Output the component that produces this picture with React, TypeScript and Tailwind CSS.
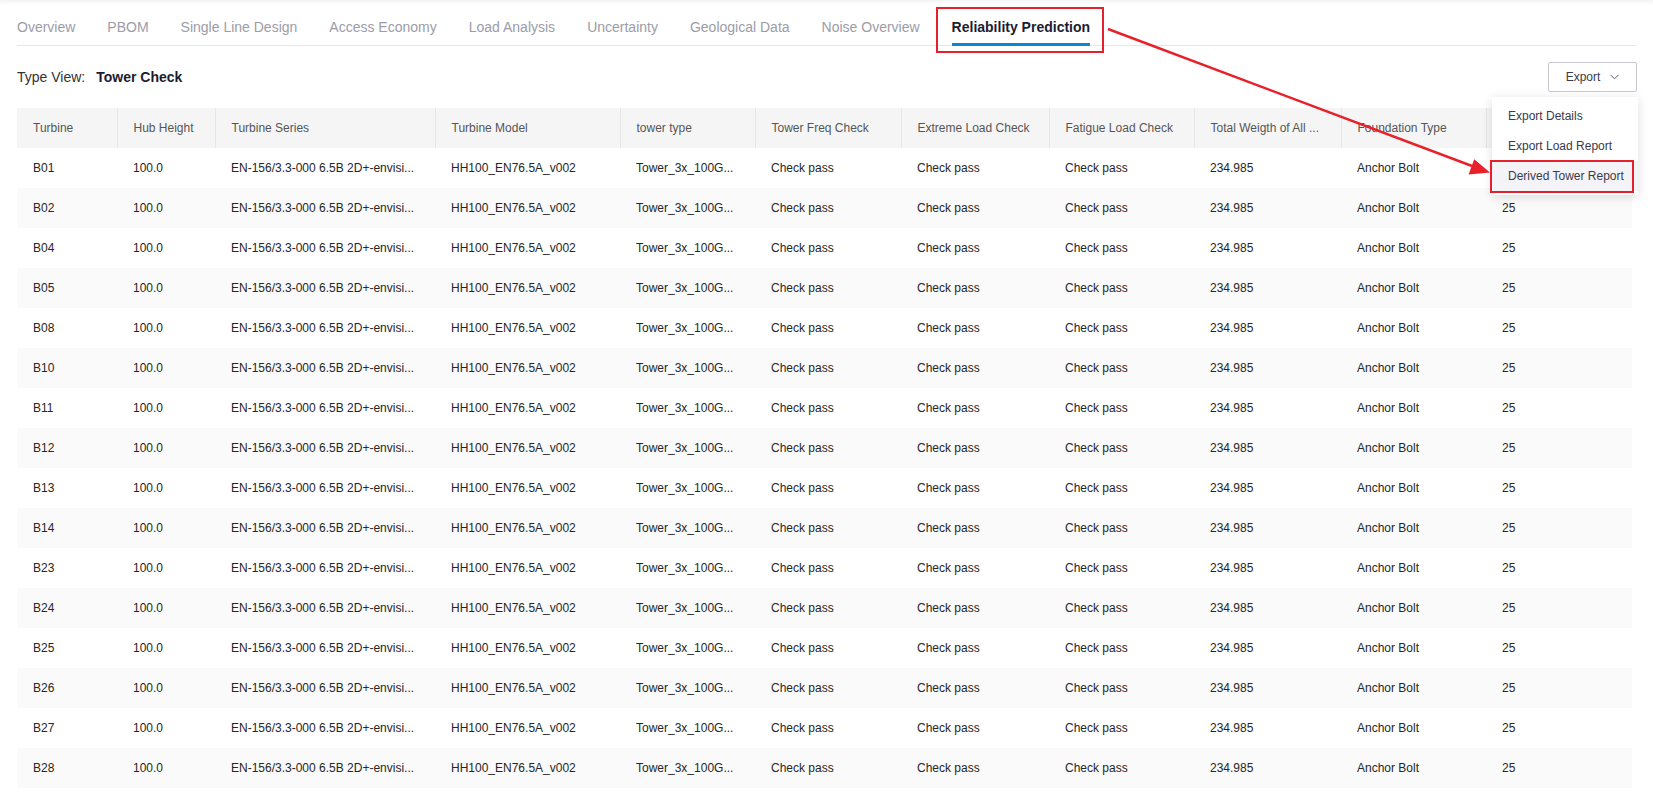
import React from 'react';

const tabs = [
  'Overview',
  'PBOM',
  'Single Line Design',
  'Access Economy',
  'Load Analysis',
  'Uncertainty',
  'Geological Data',
  'Noise Overview',
  'Reliability Prediction',
];

// last header is hidden under the export menu in the screen
const columns = [
  { title: 'Turbine', width: 100 },
  { title: 'Hub Height', width: 98 },
  { title: 'Turbine Series', width: 220 },
  { title: 'Turbine Model', width: 185 },
  { title: 'tower type', width: 135 },
  { title: 'Tower Freq Check', width: 146 },
  { title: 'Extreme Load Check', width: 148 },
  { title: 'Fatigue Load Check', width: 145 },
  { title: 'Total Weigth of All ...', width: 147 },
  { title: 'Foundation Type', width: 145 },
  { title: '', width: 146 },
];

const turbines = ['B01', 'B02', 'B04', 'B05', 'B08', 'B10', 'B11', 'B12', 'B13', 'B14', 'B23', 'B24', 'B25', 'B26', 'B27', 'B28'];

const rows = turbines.map((id) => [
  id,
  '100.0',
  'EN-156/3.3-000 6.5B 2D+-envisi...',
  'HH100_EN76.5A_v002',
  'Tower_3x_100G...',
  'Check pass',
  'Check pass',
  'Check pass',
  '234.985',
  'Anchor Bolt',
  '25',
]);

// red callout arrow drawn over the page
function Arrow() {
  return (
    <svg className="pointer-events-none absolute left-0 top-0" width="1653" height="796">
      <line x1="1108" y1="29" x2="1472" y2="166" stroke="#e8202a" strokeWidth="2.5" />
      <polygon points="1490,172.5 1468.6,174.4 1474.2,159.3" fill="#e8202a" />
    </svg>
  );
}

export default function App() {
  return (
    <div
      className="relative h-[796px] overflow-hidden bg-white px-[17px] text-[#333] shadow-[inset_0_5px_5px_-4px_rgba(0,0,0,0.07)]"
      style={{ fontFamily: '"Liberation Sans", Arial, sans-serif' }}
    >
      {/* tabs */}
      <div className="flex h-[46px] gap-8 border-b border-[#e6e6e9]">
        {tabs.map((t) => {
          const active = t === 'Reliability Prediction';
          return (
            <div
              key={t}
              className={
                active
                  ? 'relative -mb-px flex h-[46px] items-center border-b-[3px] border-[#0a88d4] pt-[11px] text-[14px] font-bold text-[#1c1c33]'
                  : 'relative -mb-px flex h-[46px] items-center border-b-[3px] border-transparent pt-[11px] text-[14px] text-[#9c9ca8]'
              }
            >
              {t}
              {active && (
                <div className="absolute left-[-16px] right-[-14px] top-[7px] h-[46px] border-2 border-[#e4202a]" />
              )}
            </div>
          );
        })}
      </div>

      {/* type view + export */}
      <div className="mt-4 flex h-[30px] items-center justify-between">
        <div className="flex items-center gap-[11px] text-[14px]">
          <span className="text-[#333]">Type View:</span>
          <span className="font-bold text-[#1c1c2e]">Tower Check</span>
        </div>
        <button className="mr-[-1px] flex h-[30px] w-[89px] items-center justify-center gap-[10px] rounded-[2px] border border-[#c9c9d2] bg-white text-[12px] text-[#3a3a4a]">
          Export
          <svg width="9" height="6" viewBox="0 0 9 6" fill="none">
            <path d="M0.5 0.8 L4.5 4.8 L8.5 0.8" stroke="#5a5a6a" strokeWidth="1" />
          </svg>
        </button>
      </div>

      {/* table */}
      <table className="mt-4 w-[1615px] table-fixed border-collapse text-[12px]">
        <colgroup>
          {columns.map((c, i) => (
            <col key={i} style={{ width: c.width }} />
          ))}
        </colgroup>
        <thead>
          <tr className="h-10 bg-[#f5f5f6]">
            {columns.map((c, i) => (
              <th
                key={i}
                className={
                  i < columns.length - 1
                    ? 'truncate border-r border-[#e6e6e8] pl-4 text-left font-normal text-[#555]'
                    : 'truncate pl-4 text-left font-normal text-[#555]'
                }
              >
                {c.title}
              </th>
            ))}
          </tr>
        </thead>
        <tbody>
          {rows.map((r, ri) => (
            <tr key={r[0]} className={ri % 2 === 1 ? 'h-10 bg-[#fafafa]' : 'h-10 bg-white'}>
              {r.map((v, ci) => (
                <td key={ci} className="whitespace-nowrap pl-4 text-[#262626]">
                  {v}
                </td>
              ))}
            </tr>
          ))}
        </tbody>
      </table>

      {/* export dropdown */}
      <div className="absolute left-[1492px] top-[97px] w-[146px] bg-white py-1 text-[12px] text-[#3a3a4a] shadow-[0_2px_10px_rgba(0,0,0,0.13)]">
        <div className="flex h-[30px] items-center pl-4">Export Details</div>
        <div className="flex h-[30px] items-center pl-4">Export Load Report</div>
        <div className="flex h-[30px] items-center bg-[#f3f3f8] pl-4">Derived Tower Report</div>
      </div>
      <div className="absolute left-[1490px] top-[160px] h-[33px] w-[144px] border-2 border-[#e4202a]" />

      <Arrow />
    </div>
  );
}
